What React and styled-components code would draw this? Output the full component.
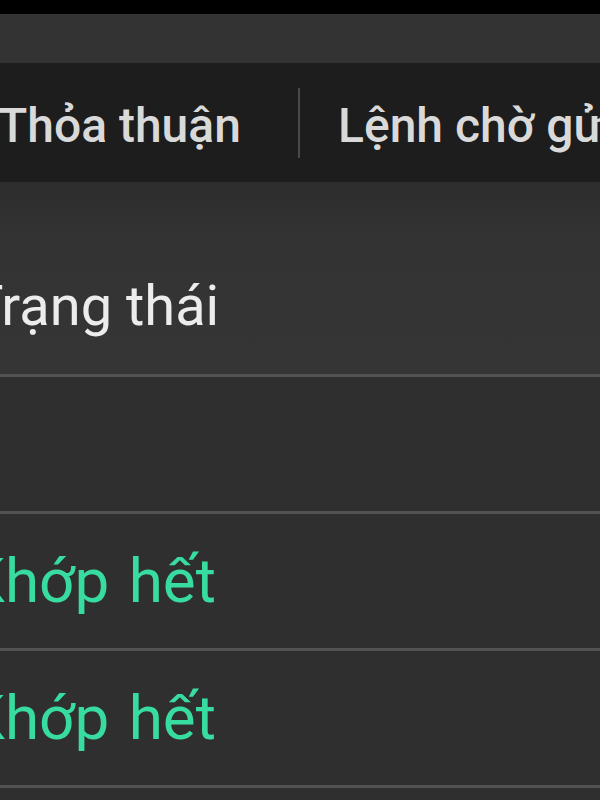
import styled, { createGlobalStyle } from "styled-components";

const Global = createGlobalStyle`
  html, body {
    margin: 0;
    padding: 0;
    background: #2f2f2f;
  }
`;

const Screen = styled.div`
  width: 600px;
  height: 800px;
  overflow: hidden;
  background: #2f2f2f;
  font-family: Roboto, "Noto Sans", sans-serif;
  display: flex;
  flex-direction: column;
`;

const StatusEdge = styled.div`
  height: 14px;
  flex: none;
  background: #000;
`;

const Toolbar = styled.div`
  height: 49px;
  flex: none;
  background: #333333;
`;

const Tabs = styled.div`
  height: 119px;
  flex: none;
  background: #1d1d1d;
  display: flex;
  align-items: center;
  white-space: nowrap;
`;

const Tab = styled.div`
  flex: none;
  width: ${(p) => (p.$width ? `${p.$width}px` : "auto")};
  margin-left: ${(p) => p.$offset || 0}px;
  font-size: 48px;
  font-weight: 500;
  line-height: 1;
  color: #d9d9d9;
  padding-top: 6px;
`;

const Divider = styled.div`
  width: 2px;
  height: 70px;
  margin-right: 38px;
  background: #4a4a4a;
  flex: none;
`;

const Header = styled.div`
  height: 192px;
  flex: none;
  box-sizing: border-box;
  padding-top: 96px;
  background: linear-gradient(#2d2d2d 0%, #333333 30%, #353535 100%);
`;

const Row = styled.div`
  height: 137px;
  flex: none;
  box-sizing: border-box;
  border-top: 3px solid #525252;
  padding-top: 36px;
  background: #2f2f2f;
`;

const Cell = styled.div`
  margin-left: ${(p) => p.$offset}px;
  font-size: ${(p) => (p.$tone === "done" ? 62 : 56)}px;
  word-spacing: ${(p) => (p.$tone === "done" ? 4 : 0)}px;
  line-height: 1;
  white-space: nowrap;
  color: ${(p) => (p.$tone === "done" ? "#38dca0" : "#ececec")};
`;

const rows = [
  { status: "" },
  { status: "Khớp hết", tone: "done" },
  { status: "Khớp hết", tone: "done" },
  { status: "" },
];

export default function App() {
  return (
    <>
      <Global />
      <Screen>
        <StatusEdge />
        <Toolbar />
        <Tabs>
          <Tab $offset={-2} $width={300}>Thỏa thuận</Tab>
          <Divider />
          <Tab>Lệnh chờ gửi</Tab>
        </Tabs>
        <Header>
          <Cell $offset={-30}>Trạng thái</Cell>
        </Header>
        {rows.map((r, i) => (
          <Row key={i}>
            {r.status && (
              <Cell $offset={-34} $tone={r.tone}>
                {r.status}
              </Cell>
            )}
          </Row>
        ))}
      </Screen>
    </>
  );
}
